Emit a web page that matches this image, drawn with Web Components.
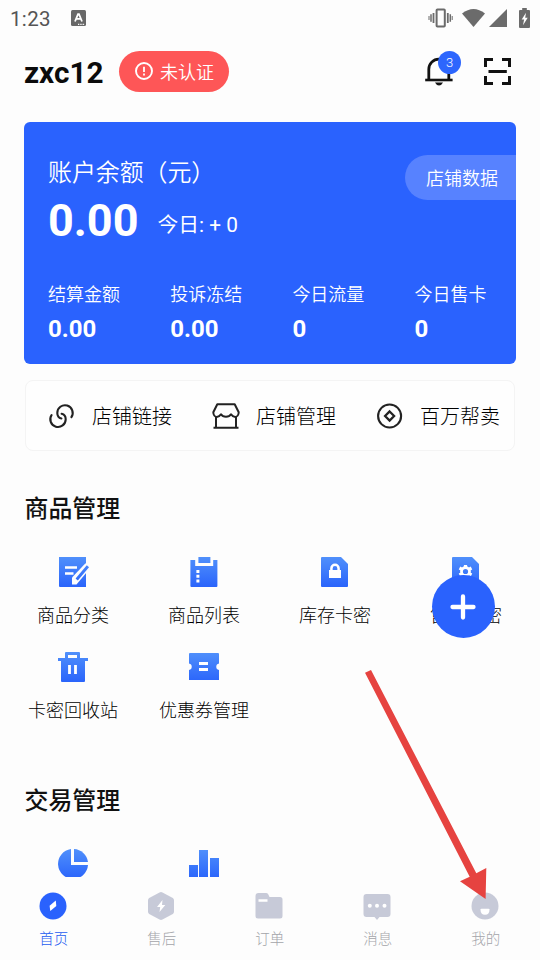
<!DOCTYPE html>
<html lang="zh-CN">
<head>
<meta charset="utf-8">
<title>店铺首页</title>
<style>
html,body{margin:0;height:100%}
body{font-family:Roboto,"Noto Sans CJK SC",sans-serif;background:#fdfdfd;overflow:hidden}
</style>
</head>
<body>
<shop-app></shop-app>
<script>
const define=(name,css,html)=>customElements.define(name,class extends HTMLElement{
  constructor(){
    super();
    const t=document.createElement('template');
    t.innerHTML=`<style>*{box-sizing:border-box}${css}</style>${typeof html==='function'?html(this):html}`;
    this.attachShadow({mode:'open'}).append(t.content.cloneNode(true));
  }
});

const GRAD='<defs><linearGradient id="g" x1="0" y1="0" x2="0" y2="30" gradientUnits="userSpaceOnUse"><stop offset="0" stop-color="#5090fb"/><stop offset="1" stop-color="#2a64fb"/></linearGradient></defs>';
const ICONS={
  vibrate:['0 0 25 20','<g fill="none" stroke="#6b6b6b"><rect x="8.6" y="1.5" width="8.2" height="17" rx=".8" stroke-width="2"/><path d="M5.500 5v10M19.800 5v10" stroke-width="1.800"/><path d="M3 6.300v7.400M22.300 6.300v7.400" stroke-width="1.500"/><path d="M1 8v4M24.200 8v4" stroke-width="1"/></g>'],
  wifi:['0 0 23 18','<path d="M0 4.6Q11.5-4.4 23 4.6L11.5 18z" fill="#6b6b6b"/>'],
  signal:['0 0 18 18','<path d="M18 0v18H0z" fill="#6b6b6b"/>'],
  battery:['0 0 11 20','<path d="M3.2 0h4.6v2H10q1 0 1 1v16q0 1-1 1H1q-1 0-1-1V3q0-1 1-1h2.2z" fill="#6b6b6b"/><path d="M7 4.7 2.7 11.5h2.400L4 17.200 8.700 9.700H6.200z" fill="#fff"/>'],
  keyboard:['0 0 15 16','<rect width="15" height="16" rx="1.5" fill="#686868"/><path d="M4 11.500 7 4.200h1L11 11.500M5.500 8.900h4" fill="none" stroke="#fff" stroke-width="1.800"/><path d="M7 14.300h7" stroke="#fff" stroke-width="1.200" stroke-dasharray="1.300 1"/>'],
  alert:['0 0 18 18','<circle cx="9" cy="9" r="8" fill="none" stroke="#fff" stroke-width="1.900"/><path d="M9 4.700v5.200M9 11.400v2" stroke="#fff" stroke-width="1.800"/>'],
  bell:['0 0 28 30','<path d="M3.800 24V13.200a10 10 0 0 1 20 0V24" fill="none" stroke="#111" stroke-width="2.800"/><path d="M.2 24h27.400" stroke="#111" stroke-width="2.600"/><path d="M10 26.500h8q-1.500 3-4 3t-4-3z" fill="#111"/>'],
  scan:['0 0 27 27','<path d="M1.500 9V1.500H9M18 1.500h7.500V9M25.500 18v7.500H18M9 25.500H1.500V18M4.500 13.500h18.300" fill="none" stroke="#111" stroke-width="3"/>'],
  link:['0 0 26 26','<g fill="none" stroke="#222" stroke-width="2.100" stroke-linecap="round" transform="translate(.6)"><path d="M22.800 14.200A7.700 7.700 0 1 0 8.700 10C8.700 12.500 10.400 14.900 12.800 15.500"/><path d="M3 12A7.700 7.700 0 1 0 17.100 16.200C17.100 13.700 15.400 11.300 13 10.700"/></g>'],
  store:['0 0 28 26','<g fill="none" stroke="#222" stroke-width="2" stroke-linejoin="round"><path d="M5.300 1.300h17.400l4 8c0 2.400-1.500 4.600-3.500 4.600s-3.200-1-4.200-2.600C18 13 16 13.800 14 13.800s-4-.8-5-2.500C8 12.900 6.700 13.900 4.800 13.900c-2 0-3.500-2.200-3.500-4.600z"/><path d="M4 14v10.500M24 14v10.500M1.500 24.700h25"/></g>'],
  coin:['0 0 26 26','<g fill="none" stroke="#222" stroke-width="2.100" transform="translate(.6)"><circle cx="13" cy="13" r="11.500"/><path d="m13 8.500 4.500 4.500-4.500 4.500L8.500 13z" stroke-width="2.300"/></g>'],
  edit:['0 0 30 30',GRAD+'<path d="M1 0h27v30H2q-1 0-1-1z" fill="url(#g)"/><path d="M7 10.500h12M7 16.500h8.500" stroke="#fff" stroke-width="2.500"/><path d="M14 20.500 27.500 6.200l5 4.500L18.500 27.500H14z" fill="#fdfdfd"/><path d="M28.800 8.300 31 10.300 19.800 23.500 17.600 21.400z" fill="url(#g)"/>'],
  list:['0 0 30 30',GRAD+'<g transform="translate(-.6)"><path d="M2 3h4.800v6h18V3H29v26q0 1-1 1H3q-1 0-1-1V3z" fill="url(#g)"/><path d="M10 0h12v6H10z" fill="url(#g)"/><path d="M8 13h3v3H8zm0 4.800h3v3H8zm0 4.700h3v3H8z" fill="#fff"/></g>'],
  lock:['0 0 30 30',GRAD+'<path d="M3 0h18l7 7v22q0 1-1 1H2q-1 0-1-1V1q0-1 1-1z" fill="url(#g)"/><path d="M9 13h12v8H9z" fill="#fff"/><path d="M11.400 14v-2.600a3.600 3.600 0 0 1 7.200 0V14" fill="none" stroke="#fff" stroke-width="2.500"/>'],
  gear:['0 0 30 30',GRAD+'<path d="M3 0h18l7 7v22q0 1-1 1H2q-1 0-1-1V1q0-1 1-1z" fill="url(#g)"/><circle cx="14.500" cy="14.500" r="4" fill="none" stroke="#fff" stroke-width="2.800"/><path d="M14.500 8v3M14.500 18v3M8.500 11l3 1.600M17.500 16.400l3 1.600M8.500 18l3-1.600M17.500 12.600l3-1.600" stroke="#fff" stroke-width="3.200"/>'],
  trash:['0 0 30 30',GRAD+'<path d="M7 6V1q0-1 1-1h13q1 0 1 1v5h8v3h-3v20q0 1-1 1H4q-1 0-1-1V9H0V6zM10 3v3h9V3z" fill="url(#g)" fill-rule="evenodd"/><path d="M11.500 13v9M17.500 13v9" stroke="#fff" stroke-width="2.800"/>'],
  coupon:['0 0 30 30',GRAD+'<path d="M1 1h28q1 0 1 1v9.500a3.300 3.300 0 0 0 0 6.500V28H0V18a3.300 3.300 0 0 0 0-6.500V2q0-1 1-1z" fill="url(#g)"/><path d="M10 11.500h9M10 17.500h9" stroke="#fff" stroke-width="2.800"/>'],
  pie:['0 0 30 30',GRAD+'<path d="M13 0a15 15 0 1 0 17 16H13z" fill="url(#g)"/><path d="M16 0a15 15 0 0 1 14 13H16z" fill="url(#g)"/>'],
  bars:['0 0 30 30',GRAD+'<path d="M0 16h9v14H0zM10 1h9v29h-9zM21 9h9v21h-9z" fill="url(#g)"/>'],
  home:['0 0 28 28','<circle cx="14" cy="14" r="13.500" fill="#2a62fd"/><path d="m16.800 8.500.5 5.500-6 5-.7-5.200z" fill="#fff"/>'],
  after:['0 0 28 28','<path d="M12.500.4q1.500-.8 3 0l10.300 5.700q1.200.8 1.200 2.200v11.400q0 1.400-1.200 2.200l-10.300 5.700q-1.500.8-3 0L2.200 21.900Q1 21.100 1 19.700V8.300q0-1.400 1.200-2.200z" fill="#c7cad8"/><path d="M15.500 8 10 15h3.200l-.7 5 5.800-7h-3.300z" fill="#fff"/>'],
  order:['0 0 28 28','<path d="M3.500 1H11q1.500 0 2.200 1.300L14.500 5H25q2.500 0 2.500 2.500V24q0 2.500-2.500 2.500H3Q.5 26.500.5 24V4q0-3 3-3z" fill="#c7cad8"/><path d="M3.500 8.500h9" stroke="#fff" stroke-width="2.500"/>'],
  chat:['0 0 28 28','<path d="M3.500 2h21q3 0 3 3v17q0 3-3 3h-8L14 28l-2.500-3h-8q-3 0-3-3V5q0-3 3-3z" fill="#c7cad8"/><g fill="#fff"><circle cx="6.800" cy="13.700" r="2"/><circle cx="14" cy="13.700" r="2"/><circle cx="21.500" cy="13.700" r="2"/></g>'],
  me:['0 0 28 28','<circle cx="14" cy="14" r="13.500" fill="#c7cad8"/><path d="M9.500 17.500q0-.8 1-.8h7q1 0 1 .8 0 5.300-4.500 5.300t-4.500-5.300z" fill="#fff"/>'],
  plus:['0 0 26 26','<path d="M13 2.500v21M2.500 13h21" stroke="#fff" stroke-width="4.300" stroke-linecap="round"/>']
};
customElements.define('ui-icon',class extends HTMLElement{
  connectedCallback(){
    if(this.shadowRoot)return;
    const [box,body]=ICONS[this.getAttribute('name')];
    const [, ,w,h]=box.split(' ');
    this.attachShadow({mode:'open'}).innerHTML=`<style>:host{display:block;flex:none;width:${w}px;height:${h}px}svg{display:block;overflow:visible}</style><svg width="${w}" height="${h}" viewBox="${box}">${body}</svg>`;
  }
});

define('status-bar',`:host{display:flex;height:35px;align-items:center;padding:0 10px 0}
time{font-size:20.500px;letter-spacing:.35px;width:60.500px;color:#555;padding-top:2px}
.r{display:flex;align-items:center;margin-left:auto}
.v{margin-right:9px}.w{margin-right:4px}.s{margin-right:12px}`,
`<time>1:23</time><ui-icon name="keyboard"></ui-icon><div class="r"><ui-icon class="v" name="vibrate"></ui-icon><ui-icon class="w" name="wifi"></ui-icon><ui-icon class="s" name="signal"></ui-icon><ui-icon name="battery"></ui-icon></div>`);

define('user-header',`:host{display:flex;height:72px;align-items:center;padding:0 29px 0 24px}
h1{margin:0;font-size:29.700px;font-weight:700;color:#0b0b0b;width:95px;line-height:36px;padding-top:4px}
.pill{display:flex;align-items:center;width:110px;height:41px;border-radius:21px;background:#fe5657;color:#fff;padding-left:16px;gap:7px;font-size:18px;font-weight:350}
.bell{position:relative;margin-left:auto;margin-right:31px}
.badge{position:absolute;left:13px;top:-5px;width:23px;height:23px;border-radius:50%;background:#2d66fd;color:#fff;font-size:13px;font-weight:350;line-height:24px;text-align:center}`,
`<h1>zxc12</h1><div class="pill"><ui-icon name="alert"></ui-icon><span>未认证</span></div><div class="bell"><ui-icon name="bell"></ui-icon><span class="badge">3</span></div><ui-icon name="scan"></ui-icon>`);

define('stat-item',`:host{display:block;width:122.200px;flex:none}
span{display:block;font-size:18px;line-height:26px;font-weight:350}b{display:block;font-size:24px;line-height:30px;margin-top:6px}`,
`<span><slot></slot></span><b><slot name="value"></slot></b>`);

define('balance-card',`:host{display:block;height:242px;margin:15px 24px 0;background:#2a62fe;border-radius:6px;color:#fff;padding-left:24px;overflow:hidden}
.top{display:flex;justify-content:space-between;padding-top:33px;height:78px}
.label{font-size:23.900px;line-height:36px;font-weight:350}
.data{width:111px;height:45px;border-radius:23px 0 0 23px;background:#5782ff;font-size:18px;line-height:47px;padding-left:21px;font-weight:350}
.amt{display:flex;align-items:center;height:42px}
.amt b{font-size:45px;line-height:42px;width:109.500px}
.amt span{font-size:20.800px;line-height:30px;padding-top:8px;font-weight:400}
.stats{display:flex;margin-top:40px}`,
`<div class="top"><div class="label">账户余额（元）</div><div class="data">店铺数据</div></div>
<div class="amt"><b>0.00</b><span>今日: + 0</span></div>
<div class="stats"><stat-item>结算金额<i slot="value" style="font-style:normal">0.00</i></stat-item><stat-item>投诉冻结<i slot="value" style="font-style:normal">0.00</i></stat-item><stat-item>今日流量<i slot="value" style="font-style:normal">0</i></stat-item><stat-item>今日售卡<i slot="value" style="font-style:normal">0</i></stat-item></div>`);

define('quick-link',`:host{display:flex;align-items:center;width:164px;flex:none;font-size:20px;font-weight:300;color:#000}
.ic{width:44px;flex:none}`,
el=>`<div class="ic"><ui-icon name="${el.getAttribute('icon')}"></ui-icon></div><slot></slot>`);
define('quick-links',`:host{display:flex;height:71px;margin:16px 25px 0;border:1px solid #f4f4f4;border-radius:8px;padding-left:22px;background:#fefefe}`,`<slot></slot>`);

define('menu-section',`:host{display:block}
h2{margin:0 0 0 24.500px;font-size:23.900px;font-weight:500;line-height:36px;color:#111}
.grid{display:grid;grid-template-columns:repeat(4,131px);margin:30px 0 0 7.200px;row-gap:13px}`,
`<h2><slot name="title"></slot></h2><div class="grid"><slot></slot></div>`);
define('menu-item',`:host{display:flex;flex-direction:column;align-items:center;height:82px;font-size:18px;font-weight:300;color:#000}
span{line-height:26px;margin-top:16px;padding-left:.8px;white-space:nowrap}`,
el=>`<ui-icon name="${el.getAttribute('icon')}"></ui-icon><span><slot></slot></span>`);

define('tab-item',`:host{display:flex;flex-direction:column;align-items:center;width:108px;font-size:14.500px;font-weight:300;color:#a4a5aa}
:host([active]){color:#1d5cf0}span{line-height:22px;margin-top:9px;padding-left:.6px}`,
el=>`<ui-icon name="${el.getAttribute('icon')}"></ui-icon><span><slot></slot></span>`);
define('tab-bar',`:host{display:flex;height:83px;padding-top:15px;margin-left:-.6px;background:#fdfdfd}`,`<slot></slot>`);

define('add-button',`:host{display:flex;align-items:center;justify-content:center;position:absolute;left:431.700px;top:575.300px;width:63px;height:63px;border-radius:50%;background:#2a62fd}`,`<ui-icon name="plus"></ui-icon>`);
define('pointer-arrow',`:host{position:absolute;inset:0;pointer-events:none}svg{display:block}`,
`<svg width="540" height="960"><path d="M365 672.700 371 670 476.300 873.200 486.300 868 485.600 899 460 881.200 469.700 876.700z" fill="#e64340"/></svg>`);

define('shop-app',`:host{display:flex;flex-direction:column;position:relative;width:540px;height:960px;overflow:hidden}
main{height:877px;flex:none;overflow:hidden}.first{margin-top:40px}.second{margin-top:49px}`,
`<main><status-bar></status-bar><user-header></user-header><balance-card></balance-card>
<quick-links><quick-link icon="link">店铺链接</quick-link><quick-link icon="store">店铺管理</quick-link><quick-link icon="coin">百万帮卖</quick-link></quick-links>
<menu-section class="first"><span slot="title">商品管理</span><menu-item icon="edit">商品分类</menu-item><menu-item icon="list">商品列表</menu-item><menu-item icon="lock">库存卡密</menu-item><menu-item icon="gear">售出卡密</menu-item><menu-item icon="trash">卡密回收站</menu-item><menu-item icon="coupon">优惠券管理</menu-item></menu-section>
<menu-section class="second"><span slot="title">交易管理</span><menu-item icon="pie"></menu-item><menu-item icon="bars"></menu-item></menu-section></main>
<tab-bar><tab-item active icon="home">首页</tab-item><tab-item icon="after">售后</tab-item><tab-item icon="order">订单</tab-item><tab-item icon="chat">消息</tab-item><tab-item icon="me">我的</tab-item></tab-bar>
<add-button></add-button><pointer-arrow></pointer-arrow>`);
</script>
</body>
</html>
